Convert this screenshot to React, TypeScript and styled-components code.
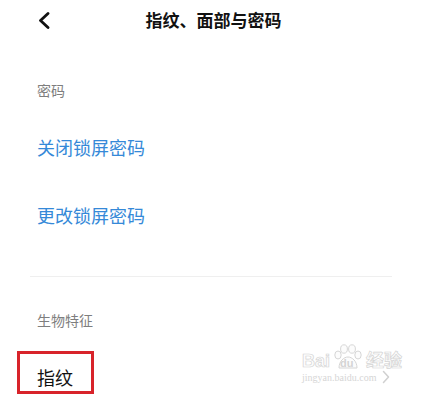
import React from 'react';
import styled, { createGlobalStyle } from 'styled-components';

const GlobalStyle = createGlobalStyle`
  html, body {
    margin: 0;
    padding: 0;
    background: #ffffff;
  }
  body {
    font-family: "Noto Sans CJK SC", "Noto Sans", sans-serif;
  }
`;

const sections = [
  {
    title: '密码',
    items: [
      { label: '关闭锁屏密码', tone: 'link' as const },
      { label: '更改锁屏密码', tone: 'link' as const },
    ],
  },
  {
    title: '生物特征',
    items: [{ label: '指纹', tone: 'plain' as const, arrow: true, marked: true }],
  },
];

function BackIcon() {
  return (
    <svg width="14" height="17" viewBox="0 0 14 17">
      <polyline
        points="11,1.5 3.5,8.5 11,15.5"
        fill="none"
        stroke="#111"
        strokeWidth="2.8"
        strokeLinecap="round"
        strokeLinejoin="round"
      />
    </svg>
  );
}

function ArrowIcon() {
  return (
    <svg width="8" height="14" viewBox="0 0 8 14">
      <polyline
        points="1.5,1.5 6.5,7 1.5,12.5"
        fill="none"
        stroke="#d0d0d0"
        strokeWidth="1.5"
        strokeLinecap="round"
        strokeLinejoin="round"
      />
    </svg>
  );
}

function Paw() {
  return (
    <svg width="34" height="26" viewBox="0 0 34 26">
      <g fill="#fcfcfc" stroke="#d6d6d6" strokeWidth="1">
        <ellipse cx="7" cy="11" rx="3.2" ry="4" />
        <ellipse cx="13" cy="5" rx="3.4" ry="4.2" />
        <ellipse cx="21" cy="5" rx="3.4" ry="4.2" />
        <ellipse cx="27" cy="11" rx="3.2" ry="4" />
        <path d="M8 24 C8 17 13 13 17 13 C21 13 26 17 26 24 Z" />
      </g>
    </svg>
  );
}

export default function App() {
  return (
    <Page>
      <GlobalStyle />
      <Header>
        <BackButton>
          <BackIcon />
        </BackButton>
        <Title>指纹、面部与密码</Title>
        <span />
      </Header>
      <Content>
        {sections.map((section, i) => (
          <Section key={section.title}>
            {i > 0 && <Divider />}
            <SectionLabel>{section.title}</SectionLabel>
            {section.items.map((item) => (
              <Row key={item.label}>
                <RowLabel $tone={item.tone} $marked={!!item.marked}>
                  {item.label}
                </RowLabel>
                {item.arrow && <ArrowIcon />}
              </Row>
            ))}
          </Section>
        ))}
      </Content>
      <Watermark>
        <MarkTop>
          <MarkText>Bai</MarkText>
          <PawBox>
            <Paw />
            <PawText>du</PawText>
          </PawBox>
          <MarkText>经验</MarkText>
        </MarkTop>
        <MarkUrl>jingyan.baidu.com</MarkUrl>
      </Watermark>
    </Page>
  );
}

const Page = styled.div`
  position: relative;
  width: 421px;
  height: 400px;
  overflow: hidden;
  background: #fff;
`;

const Header = styled.header`
  display: grid;
  grid-template-columns: 1fr auto 1fr;
  align-items: center;
  height: 40px;
`;

const BackButton = styled.div`
  display: flex;
  align-items: center;
  padding-left: 37px;
`;

const Title = styled.h1`
  margin: 0;
  font-size: 17px;
  font-weight: 700;
  color: #111;
  line-height: 40px;
  padding-left: 6px;
`;

const Content = styled.div`
  padding: 27px 29px 0 37px;
`;

const Section = styled.section`
  display: flex;
  flex-direction: column;
`;

const Divider = styled.div`
  height: 1px;
  background: #efefef;
  margin: 27px 0 20px -7px;
`;

const SectionLabel = styled.div`
  height: 46px;
  line-height: 46px;
  font-size: 14px;
  color: #7e7e7e;
`;

const Row = styled.div`
  display: flex;
  align-items: center;
  justify-content: space-between;
  height: 68px;
  padding-right: 2px;
`;

const RowLabel = styled.span<{ $tone: 'link' | 'plain'; $marked: boolean }>`
  position: relative;
  font-size: 18px;
  line-height: 24px;
  color: ${(p) => (p.$tone === 'link' ? '#3589d8' : '#111')};

  ${(p) =>
    p.$marked &&
    `
    &::after {
      content: '';
      position: absolute;
      left: -20px;
      right: -21px;
      top: -14px;
      bottom: -5px;
      border: 3px solid #d8232a;
    }
  `}
`;

const Watermark = styled.div`
  position: absolute;
  left: 302px;
  top: 344px;
  display: flex;
  flex-direction: column;
  align-items: flex-start;
`;

const MarkTop = styled.div`
  display: flex;
  align-items: flex-end;
  gap: 1px;
`;

const MarkText = styled.span`
  font-family: "Liberation Sans", "Noto Sans CJK SC", sans-serif;
  font-size: 18px;
  font-weight: 700;
  line-height: 18px;
  color: #fdfdfd;
  -webkit-text-stroke: 0.7px #d4d4d4;
`;

const PawBox = styled.span`
  position: relative;
  display: flex;
  width: 34px;
  height: 26px;
`;

const PawText = styled.span`
  position: absolute;
  left: 9px;
  bottom: 1px;
  font-family: "Liberation Sans", sans-serif;
  font-size: 11px;
  font-weight: 700;
  color: #d4d4d4;
`;

const MarkUrl = styled.span`
  font-family: "Liberation Serif", serif;
  font-size: 10px;
  color: #d6d6d6;
  margin-top: 2px;
`;
